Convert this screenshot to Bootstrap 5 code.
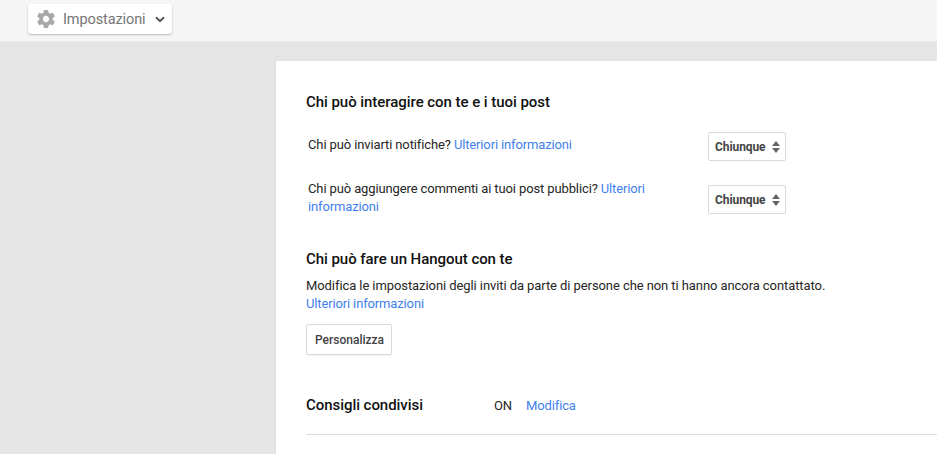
<!DOCTYPE html>
<html lang="it">
<head>
  <meta charset="UTF-8">
  <meta name="viewport" content="width=device-width, initial-scale=1.0">
  <title>Impostazioni</title>
  <link href="https://cdn.jsdelivr.net/npm/bootstrap@5.3.0/dist/css/bootstrap.min.css" rel="stylesheet">
  <style>
    html, body { height: 454px; overflow: hidden; }
    body { background: #e5e5e5; font-family: Roboto, "Liberation Sans", sans-serif; font-size: 13px; line-height: 18px; color: #262626; letter-spacing: -.08px; }
    a { color: #427fed; text-decoration: none; letter-spacing: -.14px; }
    .topbar { height: 42px; background: #f5f5f5; border-bottom: 1px solid #ebebeb; padding: 4px 0 0 28px; }
    .menu-btn { width: 144px; height: 30px; background: #fff; border-radius: 3px; box-shadow: 0 1px 2px rgba(0,0,0,.25); color: #757575; font-size: 14.5px; letter-spacing: -.1px; padding-left: 9px; }
    .menu-btn span { margin: 0 9px 0 8px; padding-top: 2px; }
    .sheet { margin: 19px 0 0 276px; height: 400px; background: #fff; border-radius: 2px 0 0 0; padding: 32px 0 0 30px; box-shadow: 0 1px 2px rgba(0,0,0,.1); }
    .sec-title { font-size: 15px; font-weight: 500; line-height: 18px; color: #111; margin: 0; letter-spacing: -.05px; }
    .opt-row { width: 482px; padding-left: 2px; }
    .opt-first { margin-top: 21px; }
    .opt-first .opt-label { padding-top: 4px; }
    .opt-second { margin-top: 18px; }
    .opt-second .opt-label { padding-top: 1px; }
    .opt-second .pick { margin-top: 6px; }
    .opt-label { width: 400px; flex: none; letter-spacing: -.12px; }
    .opt-label.wrap-label { padding-right: 50px; }
    .pick { width: 78px; height: 29px; border: 1px solid #d9d9d9; border-radius: 2px; font-size: 12px; font-weight: 700; color: #444; padding: 0 5px 0 6px; letter-spacing: -.08px; }
    .hangout-title { margin-top: 34px; }
    .hangout-text { margin: 9px 0 0; }
    .plain-btn { height: 31px; margin-top: 11px; border: 1px solid #d9d9d9; border-radius: 2px; box-shadow: 0 1px 1px rgba(0,0,0,.05); background: #fff; font-size: 12px; font-weight: 500; color: #444; padding: 0 7px 0 8px; }
    .shared-row { margin-top: 41px; }
    .state { width: 188px; flex: none; }
    .state-on { margin-right: 14px; padding-top: 1px; }
    .state-link { padding-top: 1px; }
    .rule { height: 1px; background: #dcdcdc; margin-top: 19px; }
  </style>
</head>
<body>
  <div class="topbar">
    <div class="menu-btn d-flex align-items-center">
      <svg width="18" height="18" viewBox="2 2 20 20" fill="#a8a8a8"><path d="M19.43 12.98c.04-.32.07-.64.07-.98s-.03-.66-.07-.98l2.11-1.65c.19-.15.24-.42.12-.64l-2-3.46c-.12-.22-.39-.3-.61-.22l-2.49 1c-.52-.4-1.08-.73-1.69-.98l-.38-2.65C14.46 2.18 14.25 2 14 2h-4c-.25 0-.46.18-.49.42l-.38 2.65c-.61.25-1.17.59-1.69.98l-2.49-1c-.23-.09-.49 0-.61.22l-2 3.46c-.13.22-.07.49.12.64l2.11 1.65c-.04.32-.07.65-.07.98s.03.66.07.98l-2.11 1.65c-.19.15-.24.42-.12.64l2 3.46c.12.22.39.3.61.22l2.49-1c.52.4 1.08.73 1.69.98l.38 2.65c.03.24.24.42.49.42h4c.25 0 .46-.18.49-.42l.38-2.65c.61-.25 1.17-.59 1.69-.98l2.49 1c.23.09.49 0 .61-.22l2-3.46c.12-.22.07-.49-.12-.64l-2.11-1.65zM12 15.5c-1.93 0-3.5-1.57-3.5-3.5s1.57-3.5 3.5-3.5 3.5 1.57 3.5 3.5-1.57 3.5-3.5 3.5z"/></svg>
      <span>Impostazioni</span>
      <svg width="10" height="7" viewBox="0 0 10 7"><path d="M1 1.2l4 4 4-4" fill="none" stroke="#555" stroke-width="2"/></svg>
    </div>
  </div>
  <div class="sheet">
    <h2 class="sec-title">Chi può interagire con te e i tuoi post</h2>
    <div class="opt-row opt-first d-flex align-items-start">
      <div class="opt-label">Chi può inviarti notifiche? <a href="#">Ulteriori informazioni</a></div>
      <div class="pick d-flex align-items-center justify-content-between">Chiunque
        <svg width="8" height="12" viewBox="0 0 8 12" fill="#666"><path d="M4 0l4 5H0zM4 12L0 7h8z"/></svg>
      </div>
    </div>
    <div class="opt-row opt-second d-flex align-items-start">
      <div class="opt-label wrap-label">Chi può aggiungere commenti ai tuoi post pubblici? <a href="#">Ulteriori informazioni</a></div>
      <div class="pick d-flex align-items-center justify-content-between">Chiunque
        <svg width="8" height="12" viewBox="0 0 8 12" fill="#666"><path d="M4 0l4 5H0zM4 12L0 7h8z"/></svg>
      </div>
    </div>
    <h2 class="sec-title hangout-title">Chi può fare un Hangout con te</h2>
    <p class="hangout-text">Modifica le impostazioni degli inviti da parte di persone che non ti hanno ancora contattato.<br><a href="#">Ulteriori informazioni</a></p>
    <button type="button" class="plain-btn d-block">Personalizza</button>
    <div class="shared-row d-flex align-items-start">
      <h2 class="sec-title state">Consigli condivisi</h2>
      <span class="state-on">ON</span>
      <a class="state-link" href="#">Modifica</a>
    </div>
    <div class="rule"></div>
  </div>
  <script src="https://cdn.jsdelivr.net/npm/bootstrap@5.3.0/dist/js/bootstrap.bundle.min.js"></script>
</body>
</html>
